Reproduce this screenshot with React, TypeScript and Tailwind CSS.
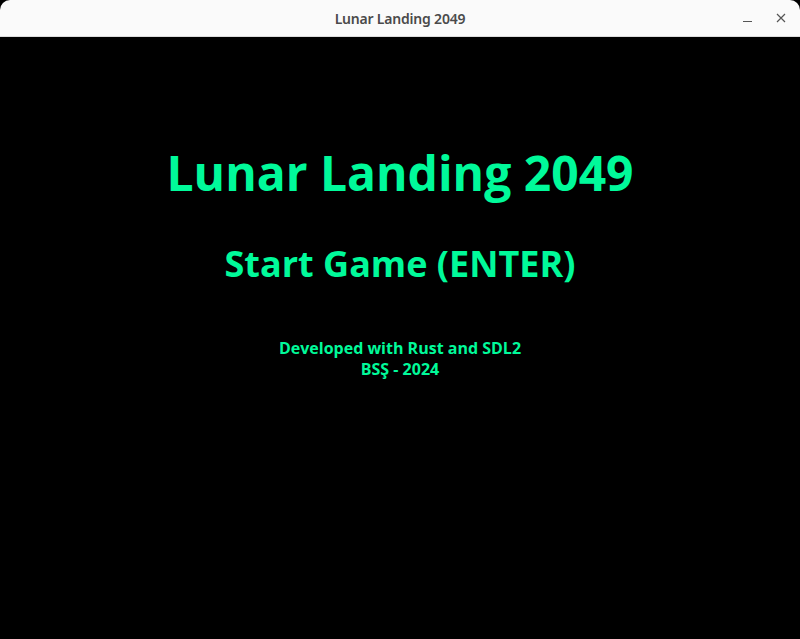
import React from 'react';

const App: React.FC = () => {
  return (
    <div className="w-[800px] h-[639px] flex flex-col bg-black overflow-hidden" style={{ fontFamily: '"Open Sans", "Noto Sans", sans-serif' }}>
      <div className="h-[37px] shrink-0 bg-[#fafafa] rounded-t-[10px] border-b border-[#dcdcdc] relative flex items-center justify-center">
        <span className="text-[14px] font-semibold text-[#4a4a4a] tracking-[-0.2px]" style={{ fontFamily: '"Noto Sans", sans-serif' }}>Lunar Landing 2049</span>
        <div className="absolute right-[14px] top-0 h-full flex items-center gap-[24px] text-[#555]">
          <span className="w-[9px] h-[1px] bg-[#555] mt-[6px]"></span>
          <svg width="10" height="10" viewBox="0 0 10 10" stroke="#555" strokeWidth="1.2">
            <path d="M1 1 L9 9 M9 1 L1 9" />
          </svg>
        </div>
      </div>
      <div className="flex-1 flex flex-col items-center text-[#00fa9a] font-bold">
        <h1 className="mt-[104px] text-[48px] leading-[64px]">Lunar Landing 2049</h1>
        <p className="mt-[35px] text-[36px] leading-[48px]">Start Game (ENTER)</p>
        <div className="mt-[50px] flex flex-col items-center text-[16px] leading-[21px]">
          <span>Developed with Rust and SDL2</span>
          <span>BSŞ - 2024</span>
        </div>
      </div>
    </div>
  );
};

export default App;
